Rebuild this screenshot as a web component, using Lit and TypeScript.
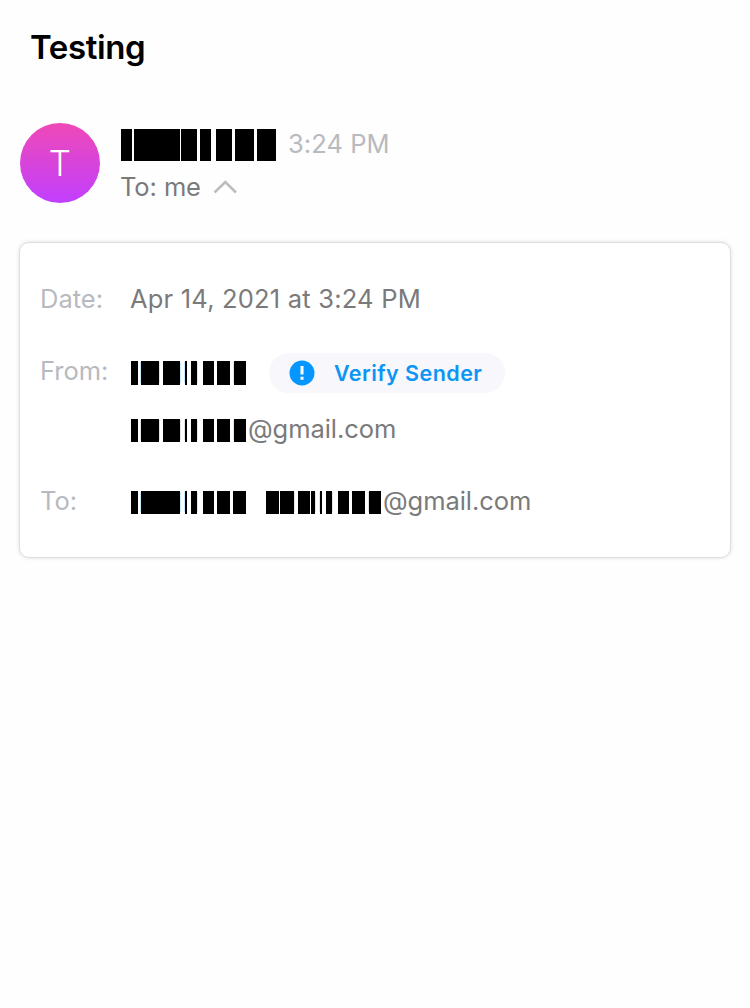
import { LitElement, html, svg, css } from "lit";
import { customElement, property } from "lit/decorators.js";

type Span = [number, number];

const NAME: Span[] = [[0, 11], [13, 59], [60, 76], [79, 90], [95, 111], [114, 133], [136, 155]];
const SHORT: Span[] = [[0, 7], [10, 28], [32, 49], [54, 56], [60, 66], [72, 83], [86, 99], [103, 115]];
const MERGED: Span[] = [[0, 7], [10, 49], [54, 56], [60, 66], [72, 83], [86, 99], [102, 115]];
const SPLIT: Span[] = [[0, 13], [14, 28], [32, 44], [45, 49], [54, 56], [60, 66], [72, 83], [86, 99], [103, 115]];

/** Name hidden behind a row of black blocks, with a faint tint in some gaps. */
@customElement("redacted-text")
export class RedactedText extends LitElement {
  @property({ attribute: false }) spans: Span[] = [];
  @property({ type: Number }) height = 23;
  @property() tint = "";

  static styles = css`
    :host { display: block; flex: none; }
    svg { display: block; overflow: visible; }
  `;

  render() {
    const width = this.spans[this.spans.length - 1][1];
    const slivers = [9, 28, 49, 53, 66, 102];
    return html`<svg width=${width} height=${this.height} shape-rendering="crispEdges">
      ${this.tint
        ? slivers.map((x) => svg`<rect x=${x} y="1" width="1" height=${this.height - 3} fill=${this.tint} />`)
        : ""}
      ${this.spans.map(([a, b]) => svg`<rect x=${a} y="0" width=${b - a} height=${this.height} />`)}
    </svg>`;
  }
}

@customElement("app-root")
export class AppRoot extends LitElement {
  static styles = css`
    :host {
      display: block;
      box-sizing: border-box;
      height: 1008px;
      background: #fefefe;
      font-family: Inter, "Liberation Sans", sans-serif;
      font-size: 25.5px;
      line-height: 32px;
      color: #7a7a7b;
      white-space: nowrap;
      overflow: hidden;
    }
    h1 {
      margin: 0;
      padding: 27px 0 0 30px;
      font-size: 33px;
      line-height: 40px;
      font-weight: 600;
      letter-spacing: -0.4px;
      color: #000;
    }
    .sender { display: flex; gap: 21px; padding: 56px 20px 0; }
    .avatar {
      width: 80px;
      height: 80px;
      border-radius: 50%;
      background: linear-gradient(#ef49b6, #c13fff);
      color: #fff;
      font-size: 35px;
      line-height: 80px;
      text-align: center;
      font-weight: 300;
    }
    .who { padding-top: 6px; }
    .line { display: flex; }
    .time { margin-left: 12px; line-height: 30px; letter-spacing: 0.05px; color: #b7babf; }
    .to { display: flex; align-items: center; margin-top: 10px; margin-left: -1px; letter-spacing: -0.1px; }
    .to svg { margin-left: 12px; }
    .card {
      box-sizing: border-box;
      margin: 39px 19px 0;
      height: 316px;
      padding: 40px 20px 0;
      border: 1px solid #dedede;
      border-radius: 10px;
      background: #fff;
      box-shadow: 0 0 4px rgba(0, 0, 0, 0.12);
    }
    .row { display: grid; grid-template-columns: 91px 1fr; }
    .label { color: #b7babf; }
    .date { letter-spacing: 0.2px; margin-left: -1px; }
    .from { margin-top: 38px; height: 40px; align-items: center; }
    .from .label { padding-bottom: 4px; }
    .value { display: flex; align-items: center; }
    .mail { padding-left: 91px; margin-top: 21px; height: 32px; }
    .rcpt { margin-top: 40px; }
    .rcpt .label { line-height: 30px; }
    .domain { margin-left: 2px; line-height: 30px; padding-bottom: 2px; letter-spacing: -0.05px; }
    .second { margin-left: 20px; }
    .verify {
      display: flex;
      align-items: center;
      box-sizing: border-box;
      width: 236px;
      height: 40px;
      margin-left: 23px;
      padding-left: 20px;
      border-radius: 20px;
      background: #f8f7fc;
      color: #0c95f5;
      font-size: 21.5px;
      letter-spacing: 0.45px;
      font-weight: 600;
    }
    .verify svg { margin-right: 19px; }
  `;

  render() {
    return html`
      <h1><span>Testing</span></h1>
      <section class="sender">
        <div class="avatar">T</div>
        <div class="who">
          <div class="line">
            <redacted-text .spans=${NAME} .height=${32}></redacted-text>
            <span class="time">3:24 PM</span>
          </div>
          <div class="to">
            <span>To: me</span>
            <svg width="24" height="14" viewBox="0 0 24 14" fill="none" stroke="#bdbdbf" stroke-width="2.6">
              <path d="M1.5 12.5 12.3 2 23 12.5" />
            </svg>
          </div>
        </div>
      </section>
      <section class="card">
        <div class="row">
          <span class="label">Date:</span>
          <span class="date">Apr 14, 2021 at 3:24 PM</span>
        </div>
        <div class="row from">
          <span class="label">From:</span>
          <div class="value">
            <redacted-text .spans=${SHORT} .height=${24} tint="#c4ebff"></redacted-text>
            <div class="verify">
              <svg width="26" height="26" viewBox="0 0 26 26">
                <circle cx="13" cy="13" r="12.5" fill="#0596ff" />
                <path d="M11.5 6h3v8.5h-3zM11.5 16.8h3v3h-3z" fill="#fff" />
              </svg>
              <span>Verify Sender</span>
            </div>
          </div>
        </div>
        <div class="value mail">
          <redacted-text .spans=${SHORT} tint="#e4e4e4"></redacted-text>
          <span class="domain">@gmail.com</span>
        </div>
        <div class="row rcpt">
          <span class="label">To:</span>
          <div class="value">
            <redacted-text .spans=${MERGED} tint="#c4ebff"></redacted-text>
            <redacted-text class="second" .spans=${SPLIT} tint="#e4e4e4"></redacted-text>
            <span class="domain">@gmail.com</span>
          </div>
        </div>
      </section>
    `;
  }
}
